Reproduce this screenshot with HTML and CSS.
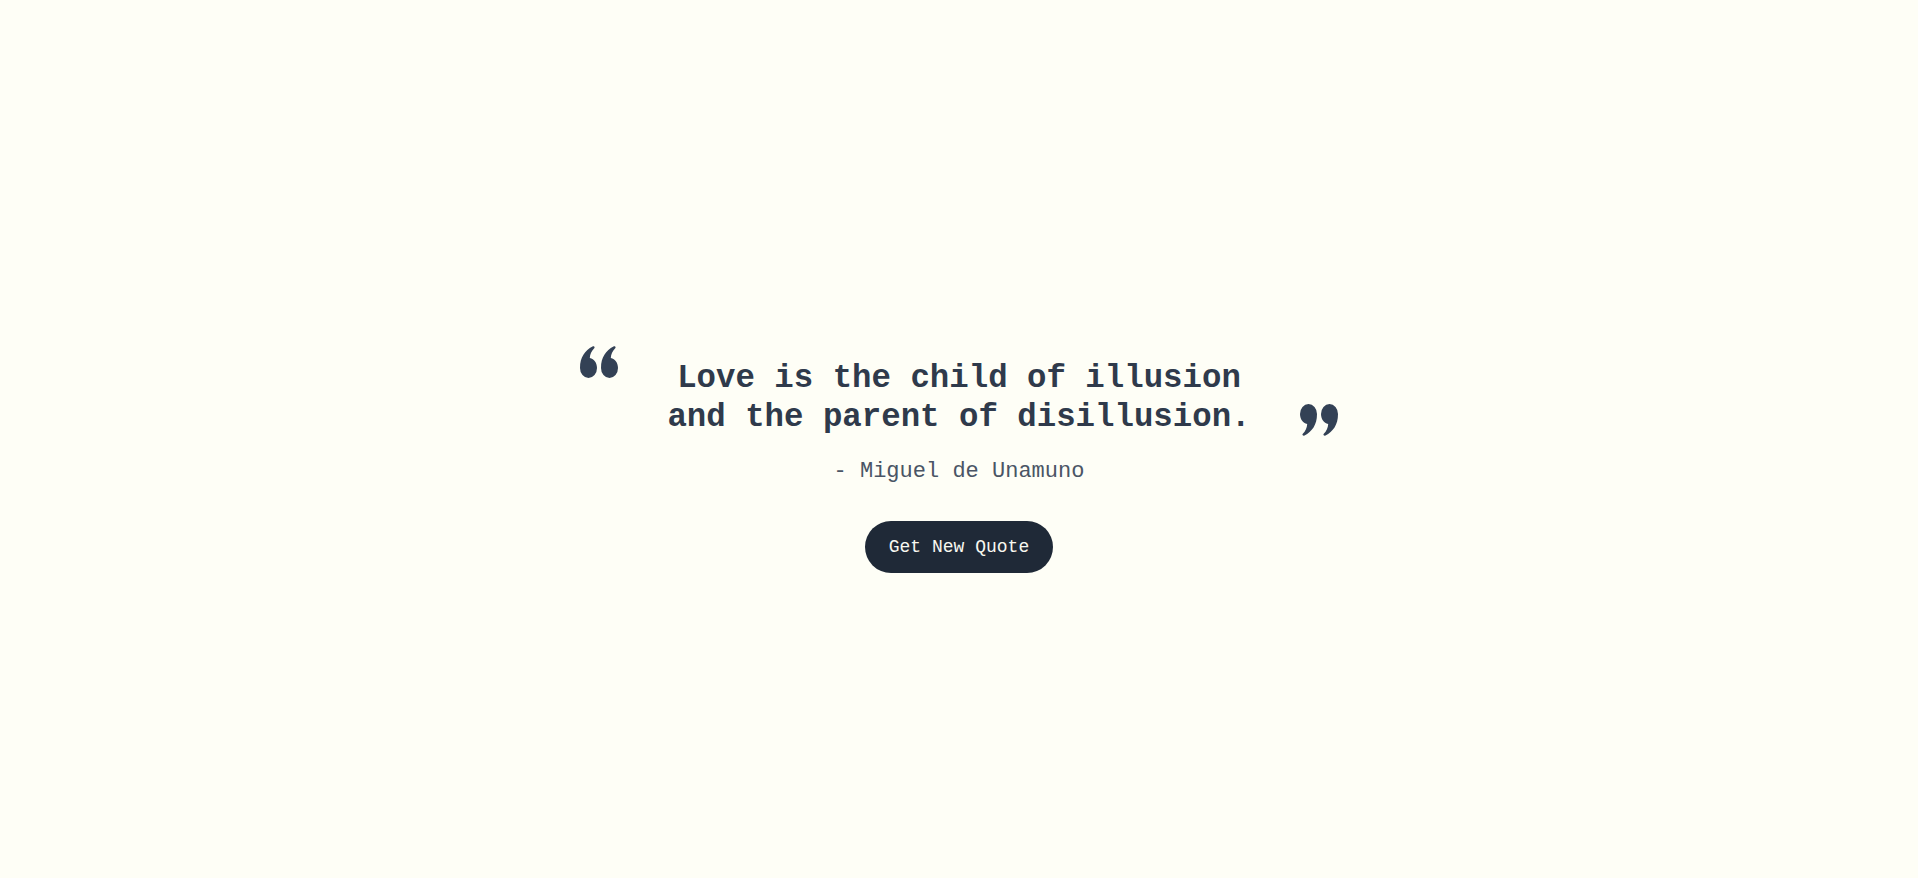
FILE: index.html
```html
<!DOCTYPE html>
<html lang="en">
<head>
<meta charset="utf-8">
<title>Quote</title>
<link rel="stylesheet" href="styles.css">
</head>
<body>
<main class="page">
  <section class="quote-card">
    <div class="quote-row">
      <svg class="mark mark-open" viewBox="0 0 38 32" width="38" height="32" aria-hidden="true">
        <g transform="rotate(180 19 16)">
          <path d="M0 10 A8.5 10 0 0 1 17 10 C17 21 12 27.5 4.5 31.5 C3 32.2 1.8 30.8 2.8 29.8 C5.5 27 7 24 7.2 20 C2.8 19.2 0 15 0 10 Z"/>
          <path d="M21 10 A8.5 10 0 0 1 38 10 C38 21 33 27.5 25.5 31.5 C24 32.2 22.8 30.8 23.8 29.8 C26.5 27 28 24 28.2 20 C23.8 19.2 21 15 21 10 Z"/>
        </g>
      </svg>
      <p class="quote-text">Love is the child of illusion<br>and the parent of disillusion.</p>
      <svg class="mark mark-close" viewBox="0 0 38 32" width="38" height="32" aria-hidden="true">
        <path d="M0 10 A8.5 10 0 0 1 17 10 C17 21 12 27.5 4.5 31.5 C3 32.2 1.8 30.8 2.8 29.8 C5.5 27 7 24 7.2 20 C2.8 19.2 0 15 0 10 Z"/>
        <path d="M21 10 A8.5 10 0 0 1 38 10 C38 21 33 27.5 25.5 31.5 C24 32.2 22.8 30.8 23.8 29.8 C26.5 27 28 24 28.2 20 C23.8 19.2 21 15 21 10 Z"/>
      </svg>
    </div>
    <p class="author">- Miguel de Unamuno</p>
    <button class="btn" type="button">Get New Quote</button>
  </section>
</main>
</body>
</html>
```

FILE: styles.css
```css
html, body {
  margin: 0;
  padding: 0;
  background: #fefef6;
}

.page {
  min-height: 100vh;
  box-sizing: border-box;
  padding-top: 54px;
  display: flex;
  flex-direction: column;
  align-items: center;
  justify-content: center;
  font-family: "Liberation Mono", "DejaVu Sans Mono", monospace;
}

.quote-card {
  display: flex;
  flex-direction: column;
  align-items: center;
}

.quote-row {
  display: flex;
  align-items: stretch;
  gap: 49px;
}

.mark {
  fill: #334155;
  flex: 0 0 auto;
}

.mark-open {
  align-self: flex-start;
  margin-top: -13px;
}

.mark-close {
  align-self: flex-end;
  margin-bottom: 1px;
}

.quote-text {
  margin: 0;
  font-size: 32.4px;
  line-height: 39px;
  font-weight: 700;
  color: #2f3a4b;
  text-align: center;
}

.author {
  margin: 18px 0 0;
  font-size: 22px;
  line-height: 33px;
  color: #4a5565;
}

.btn {
  margin-top: 33px;
  height: 52px;
  padding: 0 24px;
  border: none;
  border-radius: 26px;
  background: #1f2937;
  color: #f8f8f0;
  font-family: "Liberation Mono", "DejaVu Sans Mono", monospace;
  font-size: 18px;
  cursor: pointer;
}
```
